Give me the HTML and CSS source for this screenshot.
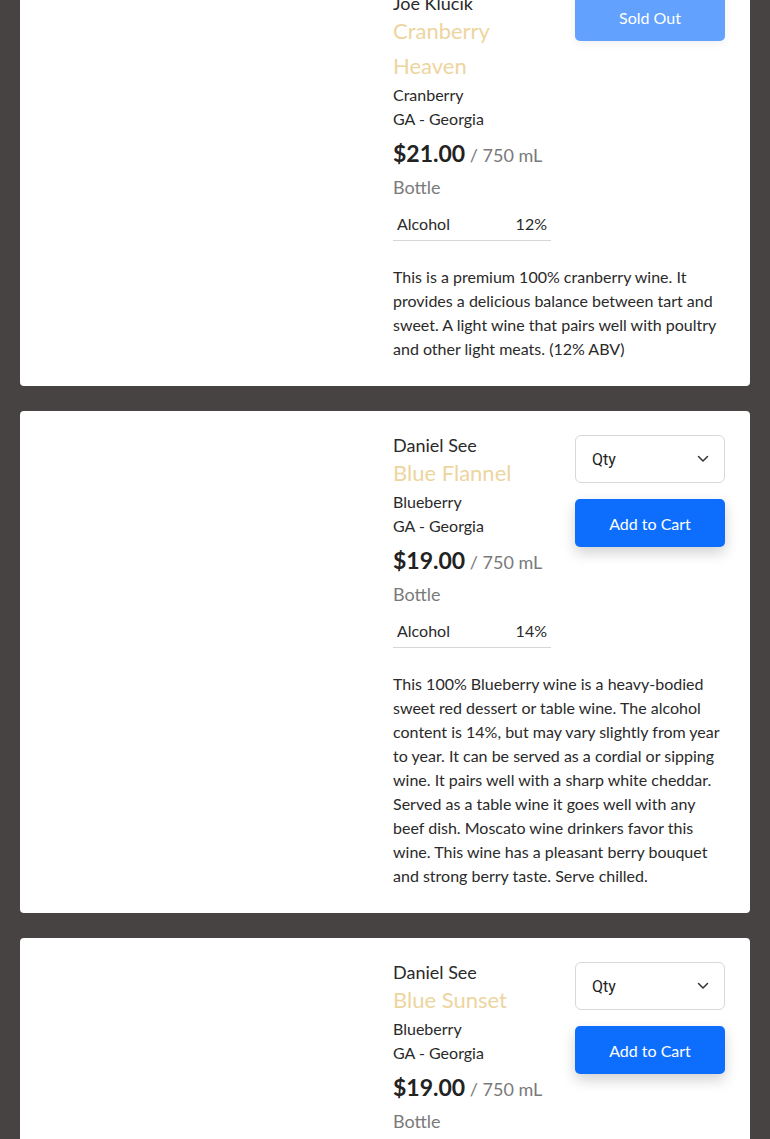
FILE: index.html
```html
<!DOCTYPE html>
<html lang="en">
<head>
<meta charset="utf-8">
<title>Wines</title>
<link rel="stylesheet" href="styles.css">
</head>
<body>
<main class="list">
  <article class="card">
    <div class="media"></div>
    <div class="content">
      <div class="top">
        <div class="info">
          <div class="maker">Joe Klucik</div>
          <h2 class="title">Cranberry Heaven</h2>
          <div class="meta">Cranberry</div>
          <div class="meta">GA - Georgia</div>
          <div class="price"><strong>$21.00</strong> <span class="unit">/ 750 mL Bottle</span></div>
          <table class="specs"><tr><td>Alcohol</td><td class="val">12%</td></tr></table>
        </div>
        <div class="actions">
          <button class="btn btn-disabled" type="button">Sold Out</button>
        </div>
      </div>
      <p class="desc">This is a premium 100% cranberry wine. It provides a delicious balance between tart and sweet. A light wine that pairs well with poultry and other light meats. (12% ABV)</p>
    </div>
  </article>

  <article class="card">
    <div class="media"></div>
    <div class="content">
      <div class="top">
        <div class="info">
          <div class="maker">Daniel See</div>
          <h2 class="title">Blue Flannel</h2>
          <div class="meta">Blueberry</div>
          <div class="meta">GA - Georgia</div>
          <div class="price"><strong>$19.00</strong> <span class="unit">/ 750 mL Bottle</span></div>
          <table class="specs"><tr><td>Alcohol</td><td class="val">14%</td></tr></table>
        </div>
        <div class="actions">
          <div class="select"><span>Qty</span><svg width="12" height="8" viewBox="0 0 12 8"><path d="M1.5 1.5 L6 6 L10.5 1.5" fill="none" stroke="#333" stroke-width="1.5" stroke-linecap="round" stroke-linejoin="round"/></svg></div>
          <button class="btn btn-primary" type="button">Add to Cart</button>
        </div>
      </div>
      <p class="desc">This 100% Blueberry wine is a heavy-bodied sweet red dessert or table wine. The alcohol content is 14%, but may vary slightly from year to year. It can be served as a cordial or sipping wine. It pairs well with a sharp white cheddar. Served as a table wine it goes well with any beef dish. Moscato wine drinkers favor this wine. This wine has a pleasant berry bouquet and strong berry taste. Serve chilled.</p>
    </div>
  </article>

  <article class="card">
    <div class="media"></div>
    <div class="content">
      <div class="top">
        <div class="info">
          <div class="maker">Daniel See</div>
          <h2 class="title">Blue Sunset</h2>
          <div class="meta">Blueberry</div>
          <div class="meta">GA - Georgia</div>
          <div class="price"><strong>$19.00</strong> <span class="unit">/ 750 mL Bottle</span></div>
          <table class="specs"><tr><td>Alcohol</td><td class="val">12%</td></tr></table>
        </div>
        <div class="actions">
          <div class="select"><span>Qty</span><svg width="12" height="8" viewBox="0 0 12 8"><path d="M1.5 1.5 L6 6 L10.5 1.5" fill="none" stroke="#333" stroke-width="1.5" stroke-linecap="round" stroke-linejoin="round"/></svg></div>
          <button class="btn btn-primary" type="button">Add to Cart</button>
        </div>
      </div>
      <p class="desc">A lighter blueberry wine with a bright, fruity finish. Pairs well with salads, soft cheeses and desserts. Serve chilled.</p>
    </div>
  </article>
</main>
</body>
</html>
```

FILE: styles.css
```css
* { box-sizing: border-box; }

html, body {
  margin: 0;
  padding: 0;
  background: #474342;
}

body {
  font-family: "Lato", "DejaVu Sans", sans-serif;
  color: #2a2a2a;
  font-size: 16px;
}

.list {
  display: flex;
  flex-direction: column;
  gap: 25px;
  padding: 0 20px 40px;
  margin-top: -31px;
}

.card {
  background: #fff;
  border-radius: 4px;
  display: grid;
  grid-template-columns: 1fr 332px;
  column-gap: 23px;
  padding: 24px 25px 25px;
}

.top {
  display: flex;
  gap: 15px;
}

.info {
  flex: 1;
  min-width: 0;
}

.maker {
  font-size: 18px;
  line-height: 20px;
}

.title {
  margin: 0;
  font-weight: 400;
  font-size: 22px;
  line-height: 35px;
  color: #edd5a0;
}

.meta {
  line-height: 24px;
}

.price {
  margin-top: 8px;
  font-size: 18px;
  line-height: 32px;
  color: #7a7a7a;
}

.price strong {
  color: #222;
  font-size: 23px;
  line-height: 1;
  font-weight: 700;
}

.specs {
  margin-top: 5px;
  width: 158px;
  border-collapse: collapse;
}

.specs td {
  padding: 4px;
  line-height: 24px;
  border-bottom: 1px solid #d6d6d6;
}

.specs .val {
  text-align: right;
}

.actions {
  width: 150px;
  display: flex;
  flex-direction: column;
  gap: 16px;
}

.select {
  height: 48px;
  border: 1px solid #d8d8d8;
  border-radius: 6px;
  display: flex;
  align-items: center;
  justify-content: space-between;
  padding: 0 15px 0 16px;
  font-family: "Roboto", "Liberation Sans", sans-serif;
  font-size: 16px;
  color: #222;
}

.btn {
  height: 48px;
  width: 150px;
  border: 0;
  border-radius: 5px;
  font-family: inherit;
  font-size: 16px;
  color: #fff;
  padding: 0;
}

.btn-primary {
  background: #0d6efd;
  box-shadow: 0 6px 14px rgba(0, 0, 0, 0.18);
}

.btn-disabled {
  background: #62a1fd;
  box-shadow: 0 3px 10px rgba(0, 0, 0, 0.06);
}

.desc {
  margin: 24px 0 0;
  line-height: 24px;
  font-size: 16px;
}
```
